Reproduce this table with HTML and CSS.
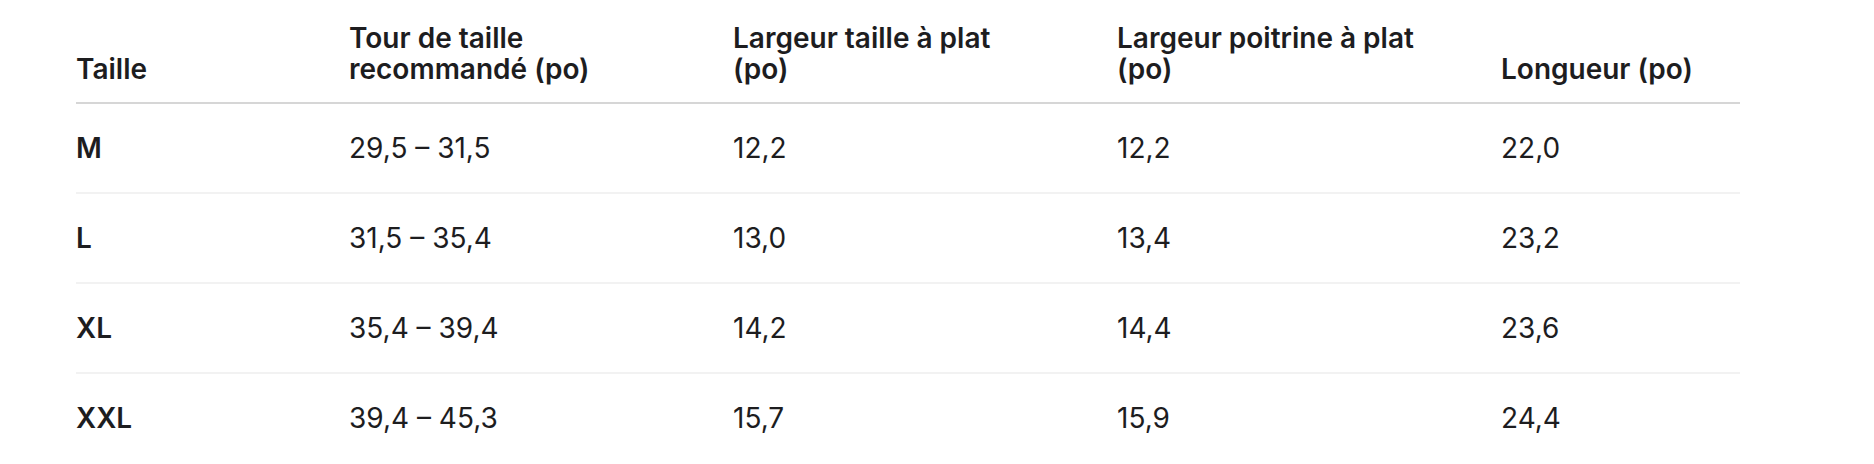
FILE: index.html
```html
<!DOCTYPE html>
<html lang="fr">
<head>
<meta charset="utf-8">
<link rel="stylesheet" href="styles.css">
</head>
<body>
<div class="wrap">
  <table class="size-table">
    <colgroup>
      <col class="c1"><col class="c2"><col class="c3"><col class="c4"><col class="c5">
    </colgroup>
    <thead>
      <tr>
        <th>Taille</th>
        <th>Tour de taille<br>recommandé (po)</th>
        <th>Largeur taille à plat<br>(po)</th>
        <th>Largeur poitrine à plat<br>(po)</th>
        <th>Longueur (po)</th>
      </tr>
    </thead>
    <tbody>
      <tr><td class="size">M</td><td>29,5 – 31,5</td><td>12,2</td><td>12,2</td><td>22,0</td></tr>
      <tr><td class="size">L</td><td>31,5 – 35,4</td><td>13,0</td><td>13,4</td><td>23,2</td></tr>
      <tr><td class="size">XL</td><td>35,4 – 39,4</td><td>14,2</td><td>14,4</td><td>23,6</td></tr>
      <tr><td class="size">XXL</td><td>39,4 – 45,3</td><td>15,7</td><td>15,9</td><td>24,4</td></tr>
    </tbody>
  </table>
</div>
</body>
</html>
```

FILE: styles.css
```css
html, body {
  margin: 0;
  padding: 0;
  background: #ffffff;
}
body {
  font-family: Inter, "Noto Sans", "Liberation Sans", sans-serif;
  color: #1d1d1f;
  font-size: 28px;
}
.wrap {
  padding: 0 0 0 76px;
}
.size-table {
  width: 1664px;
  table-layout: fixed;
  border-collapse: collapse;
  border-spacing: 0;
}
.c1 { width: 273px; }
.c2 { width: 384px; }
.c3 { width: 384px; }
.c4 { width: 384px; }
.c5 { width: 239px; }
.size-table th {
  text-align: left;
  vertical-align: bottom;
  font-weight: 600;
  line-height: 31px;
  padding: 23px 0 17px 0;
  border-bottom: 2px solid #d6d6d6;
}
.size-table td {
  text-align: left;
  vertical-align: middle;
  font-weight: 400;
  line-height: 34px;
  padding: 27px 0;
  border-bottom: 2px solid #f2f2f2;
}
.size-table tbody tr:last-child td {
  border-bottom: none;
}
.size-table td.size {
  font-weight: 600;
}
```
